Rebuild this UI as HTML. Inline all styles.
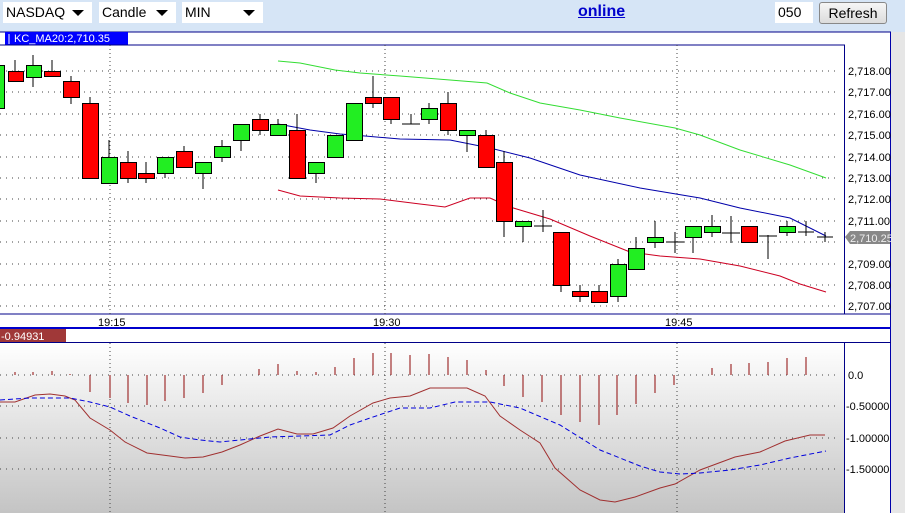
<!DOCTYPE html>
<html><head><meta charset="utf-8"><style>
*{margin:0;padding:0;box-sizing:border-box}
body{width:905px;height:513px;overflow:hidden;background:#d6e5f6;font-family:"Liberation Sans",sans-serif;position:relative}
.sel{position:absolute;top:2px;height:21px;background:#fff;font-size:14px;line-height:21px;padding-left:3px;color:#000}
.sel:after{content:"";position:absolute;right:8px;top:8px;border-left:6px solid transparent;border-right:6px solid transparent;border-top:6px solid #000}
svg{position:absolute;left:0;top:0}
</style></head><body>
<div class="sel" style="left:3px;width:89px">NASDAQ</div>
<div class="sel" style="left:99px;width:77px">Candle</div>
<div class="sel" style="left:182px;width:81px">MIN</div>
<div style="position:absolute;left:578px;top:3px;font-size:16px;font-weight:bold;color:#0000cc;text-decoration:underline">online</div>
<div style="position:absolute;left:775px;top:2px;width:38px;height:21px;background:#fff;font-size:14px;line-height:21px;padding-left:3px">050</div>
<div style="position:absolute;left:819px;top:2px;width:68px;height:22px;background:linear-gradient(#f6f6f6,#dcdcdc);border:1px solid #888;border-radius:3px;font-size:14px;line-height:20px;text-align:center">Refresh</div>
<svg width="905" height="513" font-family="Liberation Sans, sans-serif">
<defs><linearGradient id="g" x1="0" y1="0" x2="0" y2="1"><stop offset="0" stop-color="#fff"/><stop offset="1" stop-color="#c4c4c4"/></linearGradient></defs>
<rect x="891" y="32" width="14" height="481" fill="#e6e6e6"/>
<rect x="0" y="32" width="891" height="481" fill="#fff"/>
<rect x="0" y="343" width="845" height="170" fill="url(#g)"/>
<line x1="0" y1="32" x2="891" y2="32" stroke="#000088"/>
<line x1="890.5" y1="32" x2="890.5" y2="513" stroke="#0000aa"/>
<rect x="5" y="32" width="123" height="13" fill="#0000ff"/>
<line x1="9" y1="34" x2="9" y2="44" stroke="#fff"/>
<text x="14" y="42" font-size="11" fill="#fff">KC_MA20:2,710.35</text>
<line x1="0" y1="45" x2="845" y2="45" stroke="#000088"/>
<line x1="844.5" y1="45" x2="844.5" y2="314" stroke="#000088"/>
<line x1="0" y1="314" x2="891" y2="314" stroke="#000088"/>
<line x1="0" y1="328" x2="891" y2="328" stroke="#0000cc" stroke-width="2"/>
<rect x="0" y="329" width="66" height="13" fill="#a03838"/>
<text x="1" y="340" font-size="11" fill="#fff">-0.94931</text>
<line x1="0" y1="342.5" x2="891" y2="342.5" stroke="#000088"/>
<line x1="844.5" y1="343" x2="844.5" y2="513" stroke="#000088"/>
<g stroke="#444" stroke-dasharray="1,5" stroke-width="1">
<path d="M0 71H840M0 92H840M0 114H840M0 135H840M0 157H840M0 178H840M0 199H840M0 221H840M0 242H840M0 264H840M0 285H840M0 306H840"/>
<path d="M0 375H840M0 406H840M0 438H840M0 469H840"/>
</g>
<g stroke="#444" stroke-dasharray="1,3"><path d="M110 45V314M385 45V314M677 45V314M110 343V513M385 343V513M677 343V513"/></g>
<g font-size="11" fill="#000">
<text x="848" y="75">2,718.00</text><text x="848" y="96">2,717.00</text><text x="848" y="118">2,716.00</text><text x="848" y="139">2,715.00</text><text x="848" y="161">2,714.00</text><text x="848" y="182">2,713.00</text><text x="848" y="203">2,712.00</text><text x="848" y="225">2,711.00</text><text x="848" y="268">2,709.00</text><text x="848" y="289">2,708.00</text><text x="848" y="310">2,707.00</text>
<text x="98" y="326">19:15</text><text x="373" y="326">19:30</text><text x="665" y="326">19:45</text>
<text x="848" y="379">0.0</text><text x="846" y="410">-0.50000</text><text x="846" y="442">-1.00000</text><text x="846" y="473">-1.50000</text>
</g>
<path d="M845 237L850 231H890V244H850Z" fill="#888"/>
<text x="850" y="242" font-size="11" fill="#eee">2,710.25</text>
<g fill="none" stroke-width="1">
<polyline stroke="#33dd33" points="278,61 300,63 335,70 360,73 400,76 450,80 487,83 510,93 540,103 580,110 620,118 675,128 700,135 740,150 790,165 826,178"/>
<polyline stroke="#0000aa" points="278,124 310,130 340,134 365,136 400,139 450,140 490,148 530,158 580,175 640,188 700,198 740,208 790,218 826,236"/>
<polyline stroke="#cc0022" points="278,190 300,196 340,198 380,199 420,204 445,207 470,198 490,198 510,207 550,219 590,236 630,252 660,256 700,259 740,266 780,276 800,284 826,292"/>
</g>
<g stroke="#000" stroke-width="1">
<path d="M15 60V71M33 55V87M52 60V71M71 76V104M90 97V103M109 140V183M128 151V183M146 162V183M165 173V178M184 146V151M203 173V189M222 140V162M241 151V140M260 114V135M278 119V124M297 114V130M316 173V183M335 135V140M354 103V140M373 76V108M391 119V124M411 114V124M402 124H420M429 103V124M448 92V135M467 135V152M486 130V135M504 151V237M523 226V242M543 210V232M534 226H552M561 285V292M580 285V302M599 285V302M618 259V302M636 237V248M655 221V248M675 232V253M666 242H684M693 237V253M712 215V237M731 216V243M722 233H740M768 235V259M759 236H777M787 221V236M806 221V236M798 232H814M825 232V242M817 237H833"/>
<g fill="#ff0000">
<rect x="8.5" y="71.5" width="15" height="10"/><rect x="44.5" y="71.5" width="16" height="5"/><rect x="63.5" y="81.5" width="16" height="16"/><rect x="82.5" y="103.5" width="16" height="75"/><rect x="120.5" y="162.5" width="16" height="16"/><rect x="138.5" y="173.5" width="16" height="5"/><rect x="176.5" y="151.5" width="16" height="16"/><rect x="252.5" y="119.5" width="16" height="11"/><rect x="289.5" y="130.5" width="16" height="48"/><rect x="365.5" y="97.5" width="16" height="6"/><rect x="383.5" y="97.5" width="16" height="22"/><rect x="440.5" y="103.5" width="16" height="27"/><rect x="478.5" y="135.5" width="16" height="32"/><rect x="496.5" y="162.5" width="16" height="59"/><rect x="553.5" y="232.5" width="16" height="53"/><rect x="572.5" y="291.5" width="16" height="5"/><rect x="591.5" y="291.5" width="16" height="11"/><rect x="741.5" y="226.5" width="16" height="16"/>
</g>
<g fill="#22ee22">
<rect x="-1.5" y="65.5" width="6" height="43"/><rect x="26.5" y="65.5" width="15" height="12"/><rect x="101.5" y="157.5" width="16" height="26"/><rect x="157.5" y="157.5" width="16" height="16"/><rect x="195.5" y="162.5" width="16" height="11"/><rect x="214.5" y="146.5" width="16" height="11"/><rect x="233.5" y="124.5" width="16" height="16"/><rect x="270.5" y="124.5" width="16" height="11"/><rect x="308.5" y="162.5" width="16" height="11"/><rect x="327.5" y="135.5" width="16" height="22"/><rect x="346.5" y="103.5" width="16" height="37"/><rect x="421.5" y="108.5" width="16" height="11"/><rect x="459.5" y="130.5" width="16" height="5"/><rect x="515.5" y="221.5" width="16" height="5"/><rect x="610.5" y="264.5" width="16" height="32"/><rect x="628.5" y="248.5" width="16" height="21"/><rect x="647.5" y="237.5" width="16" height="5"/><rect x="685.5" y="226.5" width="16" height="11"/><rect x="704.5" y="226.5" width="16" height="6"/><rect x="779.5" y="226.5" width="16" height="6"/>
</g>
</g>
<path stroke="#a03030" stroke-width="1.2" d="M15 375V372M33 375V372M52 375V371M70 375V374M90 375V392M110 375V398M128 375V403M147 375V405M165 375V401M184 375V398M203 375V393M222 375V385M259 375V369M278 375V364M297 375V371M316 375V372M335 375V367M354 375V358M373 375V353M391 375V353M410 375V355M429 375V354M448 375V357M467 375V360M486 375V370M504 375V386M523 375V397M542 375V402M561 375V415M580 375V422M599 375V425M617 375V415M636 375V404M655 375V393M674 375V385M712 375V368M731 375V364M749 375V363M768 375V362M787 375V358M806 375V357"/>
<polyline fill="none" stroke="#a03030" points="0,402 15,402 35,395 50,394 65,396 75,400 90,418 110,430 125,442 147,453 170,456 185,458 203,457 222,452 240,445 260,436 278,429 297,434 313,434 333,428 350,416 373,403 390,398 410,396 430,388 467,388 485,396 500,416 520,430 540,443 555,468 580,490 600,500 615,502 635,497 660,488 675,484 700,470 735,457 760,452 785,441 810,435 825,435"/>
<polyline fill="none" stroke="#0000dd" stroke-dasharray="5,3" points="0,400 30,398 70,398 90,402 110,407 130,416 160,428 180,437 200,440 220,442 240,440 270,437 300,436 330,435 350,425 370,418 400,408 430,408 455,402 490,402 520,408 560,425 600,450 640,466 660,472 680,474 700,473 730,470 760,465 790,458 826,451"/>
</svg>
</body></html>
